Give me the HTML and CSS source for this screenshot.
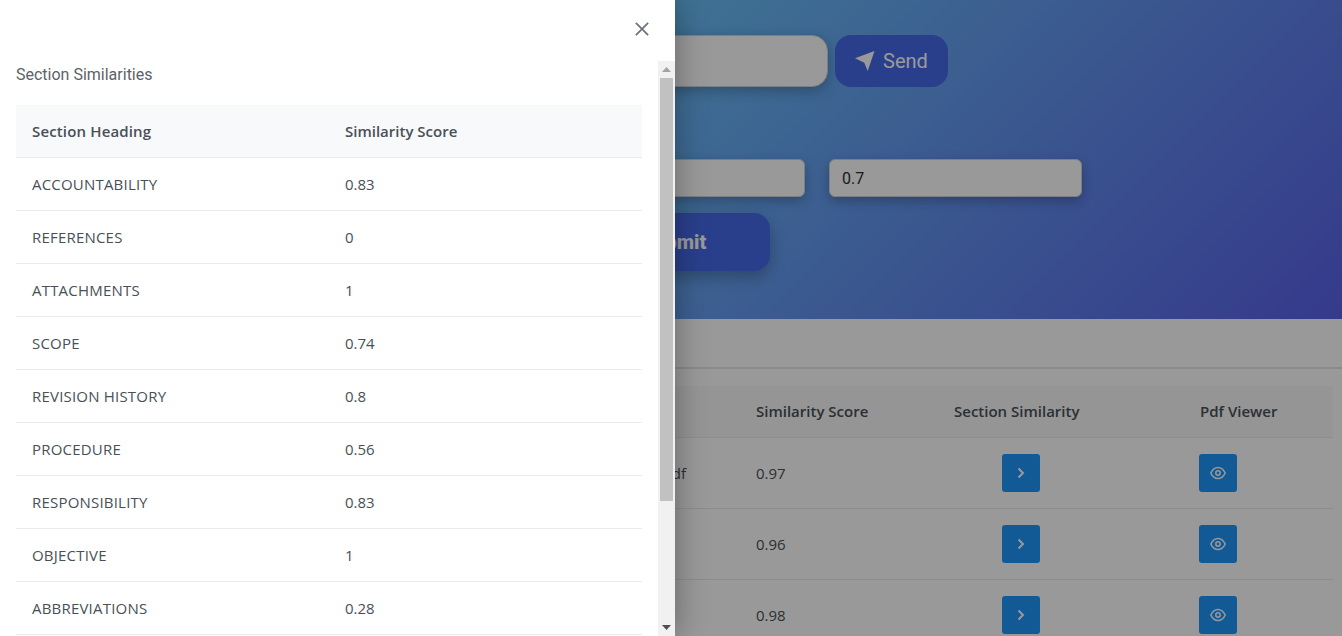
FILE: index.html
```html
<!DOCTYPE html>
<html lang="en">
<head>
    <meta charset="UTF-8">
    <meta name="viewport" content="width=device-width, initial-scale=1.0">
    <title>Document Similarity</title>
    <link rel="stylesheet" href="styles.css">
</head>
<body>

    <div class="page">
        <section class="hero">
            <div class="search-row">
                <input class="search-input" type="text">
                <button class="send-btn">
                    <svg class="send-icon" viewBox="0 0 20 20"><path d="M19.500 0 0 7.300l9.300 4.400 3.400 8.300L19.500 0Z"/></svg>
                    Send
                </button>
            </div>
            <div class="param-row">
                <input class="param-input" type="text">
                <input class="param-input" type="text" value="0.7">
            </div>
            <button class="submit-btn">Submit</button>
        </section>

        <div class="tabs"></div>

        <table class="result-table">
            <thead>
                <tr>
                    <th class="col-name"></th>
                    <th class="col-score">Similarity Score</th>
                    <th class="col-section">Section Similarity</th>
                    <th>Pdf Viewer</th>
                </tr>
            </thead>
            <tbody>
                <tr>
                    <td class="name-cell">Manual.pdf</td>
                    <td>0.97</td>
                    <td><button class="icon-btn section-btn"><svg viewBox="0 0 16 16"><path class="icon-line" d="M5.500 3.500 10 8l-4.500 4.500"/></svg></button></td>
                    <td><button class="icon-btn pdf-btn"><svg viewBox="0 0 16 16"><path class="eye-line" d="M.8 8C2.500 4.300 5 2.400 8 2.400S13.500 4.300 15.200 8c-1.700 3.700-4.200 5.600-7.200 5.600S2.500 11.700.8 8Z"/><circle class="eye-line" cx="8" cy="8" r="2.200"/></svg></button></td>
                </tr>
                <tr>
                    <td></td>
                    <td>0.96</td>
                    <td><button class="icon-btn section-btn"><svg viewBox="0 0 16 16"><path class="icon-line" d="M5.500 3.500 10 8l-4.500 4.500"/></svg></button></td>
                    <td><button class="icon-btn pdf-btn"><svg viewBox="0 0 16 16"><path class="eye-line" d="M.8 8C2.500 4.300 5 2.400 8 2.400S13.500 4.300 15.200 8c-1.700 3.700-4.200 5.600-7.200 5.600S2.500 11.700.8 8Z"/><circle class="eye-line" cx="8" cy="8" r="2.200"/></svg></button></td>
                </tr>
                <tr>
                    <td></td>
                    <td>0.98</td>
                    <td><button class="icon-btn section-btn"><svg viewBox="0 0 16 16"><path class="icon-line" d="M5.500 3.500 10 8l-4.500 4.500"/></svg></button></td>
                    <td><button class="icon-btn pdf-btn"><svg viewBox="0 0 16 16"><path class="eye-line" d="M.8 8C2.500 4.300 5 2.400 8 2.400S13.500 4.300 15.200 8c-1.700 3.700-4.200 5.600-7.200 5.600S2.500 11.700.8 8Z"/><circle class="eye-line" cx="8" cy="8" r="2.200"/></svg></button></td>
                </tr>
            </tbody>
        </table>
    </div>

    <div class="backdrop"></div>

    <aside class="drawer">
        <div class="drawer-header">
            <button class="close-btn" aria-label="Close">
                <svg viewBox="0 0 16 16"><path d="M1 1l14 14M15 1 1 15"/></svg>
            </button>
        </div>
        <div class="drawer-main">
            <div class="drawer-body">
                <p class="drawer-title">Section Similarities</p>
                <table class="section-table">
                    <thead>
                        <tr><th class="col-heading">Section Heading</th><th>Similarity Score</th></tr>
                    </thead>
                    <tbody>
                        <tr><td class="heading-cell">ACCOUNTABILITY</td><td>0.83</td></tr>
                        <tr><td class="heading-cell">REFERENCES</td><td>0</td></tr>
                        <tr><td class="heading-cell">ATTACHMENTS</td><td>1</td></tr>
                        <tr><td class="heading-cell">SCOPE</td><td>0.74</td></tr>
                        <tr><td class="heading-cell">REVISION HISTORY</td><td>0.8</td></tr>
                        <tr><td class="heading-cell">PROCEDURE</td><td>0.56</td></tr>
                        <tr><td class="heading-cell">RESPONSIBILITY</td><td>0.83</td></tr>
                        <tr><td class="heading-cell">OBJECTIVE</td><td>1</td></tr>
                        <tr><td class="heading-cell">ABBREVIATIONS</td><td>0.28</td></tr>
                    </tbody>
                </table>
            </div>
            <div class="scrollbar">
                <div class="scroll-arrow">
                    <svg viewBox="0 0 9 5"><path class="arrow-up" d="M4.500 0 9 5H0Z"/></svg>
                </div>
                <div class="scroll-track"><div class="scroll-thumb"></div></div>
                <div class="scroll-arrow">
                    <svg viewBox="0 0 9 5"><path class="arrow-down" d="M0 0H9L4.500 5Z"/></svg>
                </div>
            </div>
        </div>
    </aside>

</body>
</html>
```

FILE: styles.css
```css
* {
    box-sizing: border-box;
}

html, body {
    margin: 0;
    height: 636px;
    overflow: hidden;
}

body {
    font-family: "Open Sans", Arial, sans-serif;
    font-size: 15px;
    color: #495057;
    background-color: #fff;
    position: relative;
}

/* page behind the drawer */
.hero {
    height: 319px;
    padding: 35px 0 0 300px;
    background: linear-gradient(135deg, #74ffff 0%, #5a61e8 100%);
    font-family: Roboto, Arial, sans-serif;
}

.search-row {
    display: flex;
    gap: 7px;
    height: 52px;
}

.search-input {
    width: 528px;
    height: 52px;
    border: 1px solid #ced4da;
    border-radius: 16px;
    background-color: #fff;
    box-shadow: 0 4px 14px rgba(0, 0, 0, 0.25);
}

.send-btn {
    display: flex;
    align-items: center;
    gap: 8px;
    width: 113px;
    height: 52px;
    padding: 0 0 0 20px;
    border: none;
    border-radius: 16px;
    background-color: #4669e9;
    color: #fff;
    font-family: Roboto, Arial, sans-serif;
    font-size: 20px;
}

.send-icon {
    width: 20px;
    height: 20px;
    fill: #fff;
}

.param-row {
    display: flex;
    gap: 24px;
    justify-content: flex-end;
    width: 782px;
    margin-top: 72px;
}

.param-input {
    width: 253px;
    height: 38px;
    padding: 0 12px;
    border: 1px solid #ced4da;
    border-radius: 6px;
    background-color: #fff;
    color: #2c2c2c;
    font-family: Roboto, Arial, sans-serif;
    font-size: 16px;
    box-shadow: 0 4px 12px rgba(0, 0, 0, 0.25);
}

.submit-btn {
    display: block;
    width: 196px;
    height: 58px;
    margin: 16px 0 0 274px;
    padding: 0 0 0 4px;
    border: none;
    border-radius: 16px;
    background-color: #4669e9;
    color: #fff;
    font-family: Roboto, Arial, sans-serif;
    font-size: 20px;
    font-weight: 800;
    box-shadow: 0 6px 16px rgba(0, 0, 0, 0.25);
}

.tabs {
    height: 50px;
    border-bottom: 2px solid #e6e6e6;
}

.result-table {
    width: 1324px;
    margin: 17px 0 0 9px;
    border-collapse: collapse;
    table-layout: fixed;
}

.result-table th {
    height: 51px;
    padding: 0 16px;
    background-color: #f8f9fa;
    border-bottom: 1px solid #e9ecef;
    text-align: left;
    font-weight: 600;
}

.result-table td {
    height: 71px;
    padding: 0 16px;
    border-bottom: 1px solid #e9ecef;
}

.col-name {
    width: 731px;
}

.col-score {
    width: 198px;
}

.col-section {
    width: 246px;
}

.result-table .name-cell {
    padding-right: 54px;
    white-space: nowrap;
    text-align: right;
}

.icon-btn {
    display: flex;
    align-items: center;
    justify-content: center;
    width: 38px;
    height: 38px;
    padding: 0;
    border: none;
    border-radius: 3px;
    background-color: #1e96fa;
}

.icon-btn svg {
    width: 16px;
    height: 16px;
}

.icon-line {
    fill: none;
    stroke: #fff;
    stroke-width: 2;
}

.eye-line {
    fill: none;
    stroke: #fff;
    stroke-width: 1.5;
}

.section-btn {
    margin-left: 48px;
}

.pdf-btn {
    margin-left: -1px;
}

.backdrop {
    position: absolute;
    inset: 0;
    background-color: rgba(0, 0, 0, 0.4);
}

/* drawer */
.drawer {
    position: absolute;
    top: 0;
    left: 0;
    bottom: 0;
    width: 675px;
    display: flex;
    flex-direction: column;
    background-color: #fff;
    box-shadow: 0 0 30px rgba(0, 0, 0, 0.35);
}

.drawer-header {
    display: flex;
    justify-content: flex-end;
    height: 61px;
    padding: 21px 25px 0 0;
}

.close-btn {
    width: 16px;
    height: 16px;
    padding: 0;
    border: none;
    background: none;
}

.close-btn svg {
    display: block;
    width: 16px;
    height: 16px;
    padding: 1px;
    fill: none;
    stroke: #6b727a;
    stroke-width: 2;
}

.drawer-main {
    flex: 1;
    min-height: 0;
    display: flex;
}

.drawer-body {
    flex: 1;
    min-width: 0;
    overflow: hidden;
    padding: 0 16px;
}

.scrollbar {
    width: 17px;
    display: flex;
    flex-direction: column;
    background-color: #f1f1f1;
}

.scroll-arrow {
    display: flex;
    align-items: center;
    justify-content: center;
    height: 17px;
}

.scroll-arrow svg {
    display: block;
    width: 9px;
    height: 5px;
}

.arrow-up {
    fill: #a3a3a3;
}

.arrow-down {
    fill: #505050;
}

.scroll-track {
    flex: 1;
    padding: 0 2px;
}

.scroll-thumb {
    height: 423px;
    background-color: #c1c1c1;
}

.drawer-title {
    margin: 0;
    height: 44px;
    padding-top: 4px;
    font-family: Roboto, Arial, sans-serif;
    font-size: 16px;
    line-height: 19px;
    color: #5b6269;
}

.section-table {
    width: 626px;
    border-collapse: collapse;
    table-layout: fixed;
}

.section-table th {
    height: 52px;
    padding: 0 16px;
    background-color: #f8f9fa;
    border-bottom: 1px solid #e9ecef;
    text-align: left;
    font-weight: 600;
}

.section-table td {
    height: 53px;
    padding: 0 16px;
    border-bottom: 1px solid #e9ecef;
}

.section-table .heading-cell {
    letter-spacing: 0.2px;
}

.col-heading {
    width: 313px;
    letter-spacing: 0.15px;
}
```
